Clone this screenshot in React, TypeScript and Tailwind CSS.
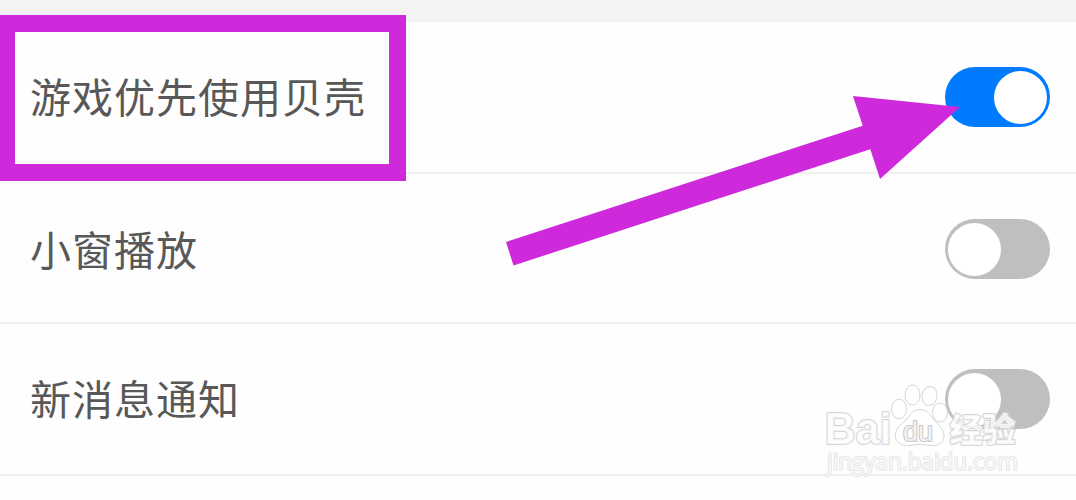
type SettingProps = { label: string; on?: boolean; rowClass: string; labelClass: string };

function Toggle({ on = false }: { on?: boolean }) {
  return (
    <button
      role="switch"
      aria-checked={on}
      className={`flex h-[60px] w-[105px] shrink-0 items-center rounded-full px-[3px] ${
        on ? "justify-end bg-[#007bff]" : "justify-start bg-[#bfbfbf]"
      }`}
    >
      <span className="size-[53px] rounded-full bg-white" />
    </button>
  );
}

function Setting({ label, on, rowClass, labelClass }: SettingProps) {
  return (
    <div className={`flex items-start justify-between border-b-2 border-[#f0f0f0] pr-[26px] pl-[30px] ${rowClass}`}>
      <span className={`text-[41px] leading-[60px] tracking-[1px] whitespace-nowrap text-[#585858] ${labelClass}`}>
        {label}
      </span>
      <Toggle on={on} />
    </div>
  );
}

function Arrow() {
  return (
    <svg className="pointer-events-none absolute top-0 left-0" width="1076" height="500" viewBox="0 0 1076 500" fill="#cf29dc">
      <path d="M506 242 L863.500 125.500 L871 149 L513.500 265.500 Z" />
      <path d="M853 96 L960 107 L880 179 Z" />
    </svg>
  );
}

function Watermark() {
  return (
    <svg
      className="pointer-events-none absolute top-[380px] left-[820px]"
      width="210"
      height="100"
      viewBox="820 380 210 100"
      fill="#ffffff"
      fillOpacity="0.75"
      stroke="#d6d6d6"
      strokeWidth="1"
      strokeLinejoin="round"
    >
      <ellipse cx="899" cy="409" rx="7.500" ry="9.800" />
      <ellipse cx="912.500" cy="395" rx="7.500" ry="10" />
      <ellipse cx="929.500" cy="396" rx="7.500" ry="9.500" transform="rotate(10 929.500 396)" />
      <ellipse cx="940" cy="412.500" rx="7.500" ry="9.500" />
      <path d="M920 409.500 C911 409.500 909 418 903 423 C895 429 893 437 898 442 C904 448 912 444.500 920 444.500 C928 444.500 936 448 942 442 C946.500 436 943 429 937 423 C931 418 929 409.500 920 409.500 Z" />
      <g fontFamily="'Liberation Sans', sans-serif" fontWeight="700" paintOrder="stroke" strokeWidth="2">
        <text x="824.500" y="444" fontSize="45" textLength="67" lengthAdjust="spacingAndGlyphs">Bai</text>
        <text x="903" y="440.500" fontSize="27" fontWeight="400" stroke="#c8c8c8" textLength="30" lengthAdjust="spacingAndGlyphs">du</text>
        <text x="949.500" y="441.500" fontSize="33" fontWeight="900" textLength="66" lengthAdjust="spacingAndGlyphs" fontFamily="'Noto Sans CJK SC', sans-serif">经验</text>
      </g>
      <text
        x="827"
        y="470"
        fontSize="23"
        textLength="191"
        lengthAdjust="spacingAndGlyphs"
        fontFamily="'Open Sans', sans-serif"
        stroke="#e2e2e2"
        strokeWidth="1.600"
        paintOrder="stroke"
      >
        jingyan.baidu.com
      </text>
    </svg>
  );
}

export default function App() {
  return (
    <main className="relative h-[500px] w-[1076px] overflow-hidden bg-[#fefefe] font-['Noto_Sans_CJK_SC',sans-serif]">
      <div className="h-[22px] border-b border-[#eeeeee] bg-[#f3f3f3]" />
      <Setting label="游戏优先使用贝壳" on rowClass="h-[152px] pt-[45px]" labelClass="-mt-[2px]" />
      <Setting label="小窗播放" rowClass="h-[150px] pt-[45px]" labelClass="-mt-px" />
      <Setting label="新消息通知" rowClass="h-[152px] pt-[45px]" labelClass="-mt-[2px]" />
      <div className="absolute top-[15px] left-0 h-[166px] w-[406px] border-y-[17px] border-r-[17px] border-l-[15px] border-[#cf29dc]" />
      <Arrow />
      <Watermark />
    </main>
  );
}
